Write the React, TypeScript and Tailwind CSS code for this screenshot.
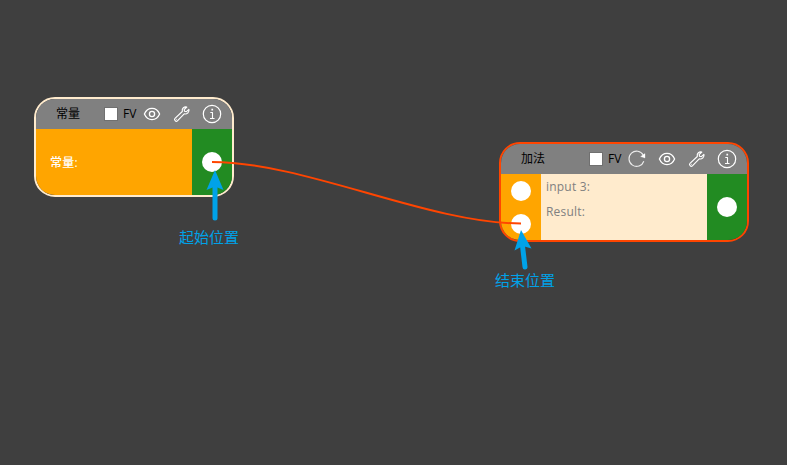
import type { ReactNode } from "react";

function Icon({ children }: { children: ReactNode }) {
  return (
    <svg
      className="size-5 shrink-0"
      viewBox="0 0 20 20"
      fill="none"
      stroke="white"
      strokeWidth="1.1"
      strokeLinejoin="round"
    >
      {children}
    </svg>
  );
}

function RefreshIcon() {
  return (
    <Icon>
      <path d="M16.3 6.2A7.6 7.6 0 1 0 16.8 12.2" strokeOpacity="0.85" />
      <path d="M18 4.6V9L13.6 7.6Z" fill="white" strokeWidth="0.3" />
    </Icon>
  );
}

function EyeIcon() {
  return (
    <Icon>
      <path d="M2.4 10C4 6.3 7 4.4 10 4.4S16 6.3 17.6 10C16 13.7 13 15.6 10 15.6S4 13.7 2.4 10Z" strokeWidth="1.3" />
      <circle cx="10" cy="10" r="2.6" strokeWidth="1.3" />
    </Icon>
  );
}

function WrenchIcon() {
  return (
    <Icon>
      <path d="M14.8 3.1C12.4 2.3 9.6 4.3 10.3 7.5L3 14.4C1.6 15.9 3.9 18.2 5.4 16.9L12.2 9.9C15.2 10.6 17.6 8 16.9 5.4L14.4 7.7L12.5 7.3L12.2 5.5Z" strokeWidth="1.15" />
      <path d="M4.3 15.5L5 14.9" strokeWidth="1" />
    </Icon>
  );
}

function InfoIcon() {
  return (
    <Icon>
      <circle cx="10" cy="10" r="8.7" strokeWidth="1.2" />
      <path d="M8.3 8.5H10.5V14.5M8 14.5H12.5" strokeWidth="1.1" />
      <path d="M9.4 4.8H11.1V6.5H9.4Z" fill="white" stroke="none" />
    </Icon>
  );
}

function Header({ title, refresh }: { title: string; refresh?: boolean }) {
  return (
    <div className="flex h-[30px] shrink-0 items-center bg-[#808080] pr-2.5 pl-5 text-xs text-black">
      <span className="mr-auto">{title}</span>
      <span className="size-3.5 border border-[#707070] bg-white" />
      <span className="ml-[5px] w-[19px] text-[12px]">FV</span>
      <div className="flex gap-2.5">
        {refresh && <RefreshIcon />}
        <EyeIcon />
        <WrenchIcon />
        <InfoIcon />
      </div>
    </div>
  );
}

function Port() {
  return <span className="size-5 rounded-full bg-white" />;
}

export default function App() {
  return (
    <main className="relative h-[465px] w-[787px] overflow-hidden bg-[#3f3f3f] font-['Open_Sans','Noto_Sans_CJK_SC',sans-serif]">
      <section className="absolute top-[97px] left-[34px] flex h-[100px] w-[200px] flex-col overflow-hidden rounded-[21px] border-2 border-[#ffebcd]">
        <Header title="常量" />
        <div className="flex flex-1">
          <div className="flex flex-1 items-center bg-[#ffa500] pt-0.5 pl-[14px] text-xs font-medium tracking-[0.2px] text-white">常量:</div>
          <div className="flex w-10 items-center justify-center bg-[#228b22]">
            <Port />
          </div>
        </div>
      </section>

      <section className="absolute top-[142px] left-[499px] flex h-[100px] w-[250px] flex-col overflow-hidden rounded-[21px] border-2 border-[#ff4500]">
        <Header title="加法" refresh />
        <div className="flex flex-1">
          <div className="flex w-10 flex-col items-center justify-around bg-[#ffa500]">
            <Port />
            <Port />
          </div>
          <div className="flex flex-1 flex-col bg-[#ffebcd] pl-[5px] text-xs leading-[25px] font-medium tracking-[0.2px] text-[#808080]">
            <span>input 3:</span>
            <span>Result:</span>
          </div>
          <div className="flex w-10 items-center justify-center bg-[#228b22]">
            <Port />
          </div>
        </div>
      </section>

      <svg className="absolute inset-0" width="787" height="465" viewBox="0 0 787 465" fill="none">
        <path d="M212 162C304.7 162 428.3 223.5 521 223.5" stroke="#ff4500" strokeWidth="2" />
        <g stroke="#00a2e8" strokeWidth="5" strokeLinecap="round">
          <path d="M215 185V218" />
          <path d="M522.5 246L525 267" />
        </g>
        <g fill="#00a2e8">
          <path d="M215 170L223.5 190L215 186.5L206.5 190Z" />
          <path d="M521 230L531.5 248.5L522.7 246L514.5 250.5Z" />
        </g>
      </svg>

      <span className="absolute top-[225px] left-[179px] text-[15px] leading-6 text-[#00a2e8]">起始位置</span>
      <span className="absolute top-[268px] left-[495px] text-[15px] leading-6 text-[#00a2e8]">结束位置</span>
    </main>
  );
}
